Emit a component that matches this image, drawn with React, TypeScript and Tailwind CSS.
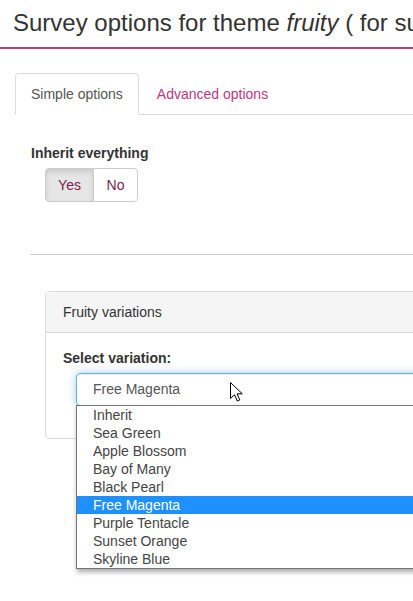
import { useState } from "react";

const variations = [
    "Inherit",
    "Sea Green",
    "Apple Blossom",
    "Bay of Many",
    "Black Pearl",
    "Free Magenta",
    "Purple Tentacle",
    "Sunset Orange",
    "Skyline Blue",
];

// Plain arrow pointer drawn over the open select
function Pointer() {
    return (
        <svg
            className="absolute left-[230px] top-[382px]"
            width="13"
            height="20"
            viewBox="0 0 13 20"
        >
            <path
                d="M0.5 0.5 L0.5 16.5 L4.5 12.8 L7.3 19 L9.8 17.9 L7.1 11.8 L12.3 11.8 Z"
                fill="#fff"
                stroke="#000"
                strokeWidth="1"
                strokeLinejoin="miter"
            />
        </svg>
    );
}

export default function App() {
    const [inherit, setInherit] = useState(true);
    const [variation, setVariation] = useState("Free Magenta");

    return (
        <div className="relative w-[413px] h-[601px] overflow-hidden bg-white text-[14px] text-[#333] font-['Liberation_Sans',Arial,sans-serif]">
            <h1 className="pt-[9px] pb-[11px] pl-[13px] text-[24px] leading-[27px] font-normal text-[#333] whitespace-nowrap border-b-2 border-[#b0457b]">
                Survey options for theme <i>fruity</i> ( for survey )
            </h1>

            {/* tabs */}
            <ul className="flex mt-[24px] ml-[15px] border-b border-[#ddd] w-[600px]">
                <li className="-mb-px">
                    <a className="block px-[15px] py-[10px] leading-[20px] text-[#555] bg-white border border-[#ddd] border-b-transparent rounded-t-[4px]">
                        Simple options
                    </a>
                </li>
                <li className="-mb-px ml-[2px]">
                    <a className="block px-[15px] py-[10px] leading-[20px] text-[#c2367f] border border-transparent rounded-t-[4px]">
                        Advanced options
                    </a>
                </li>
            </ul>

            <div className="pl-[30px]">
                <div className="mt-[28px] pl-px font-bold leading-[20px]">Inherit everything</div>
                <div className="flex mt-[5px] ml-[15px]">
                    <button
                        type="button"
                        onClick={() => setInherit(true)}
                        className={`w-[49px] h-[34px] border border-[#ccc] rounded-l-[4px] text-[#7a1f4b] ${
                            inherit ? "bg-[#e6e6e6] border-[#adadad] shadow-[inset_0_3px_5px_rgba(0,0,0,0.125)]" : "bg-white"
                        }`}
                    >
                        Yes
                    </button>
                    <button
                        type="button"
                        onClick={() => setInherit(false)}
                        className={`-ml-px w-[45px] h-[34px] border border-[#ccc] rounded-r-[4px] text-[#7a1f4b] ${
                            !inherit ? "bg-[#e6e6e6] shadow-[inset_0_3px_5px_rgba(0,0,0,0.125)]" : "bg-white"
                        }`}
                    >
                        No
                    </button>
                </div>

                <div className="mt-[52px] h-px bg-[#dacbd0]" />

                {/* variations panel */}
                <div className="mt-[36px] ml-[15px] w-[500px] border border-[#ddd] rounded-[4px]">
                    <div className="pl-[17px] pr-[15px] py-[10px] leading-[20px] bg-[#f5f5f5] border-b border-[#ddd] text-[#333]">
                        Fruity variations
                    </div>
                    <div className="pt-[15px] pb-[15px] pl-[17px] pr-[15px]">
                        <div className="font-bold leading-[20px]">Select variation:</div>
                        <div className="relative mt-[5px] mb-[17px] ml-[13px] h-[33px] pl-[16px] leading-[31px] text-[#555] border border-[#66afe9] rounded-[4px] shadow-[inset_0_1px_1px_rgba(0,0,0,0.075),0_0_8px_rgba(102,175,233,0.6)]">
                            {variation}
                            <ul className="absolute left-[-1px] top-[31px] w-[420px] bg-white border border-[#767676] shadow-[1px_3px_5px_rgba(0,0,0,0.35)] z-10">
                                {variations.map((v) => (
                                    <li
                                        key={v}
                                        onClick={() => setVariation(v)}
                                        className={`h-[18px] leading-[18px] pl-[16px] ${
                                            v === variation ? "bg-[#1e90ff] text-white" : "text-[#444]"
                                        }`}
                                    >
                                        {v}
                                    </li>
                                ))}
                            </ul>
                        </div>
                    </div>
                </div>
            </div>

            <Pointer />
        </div>
    );
}
